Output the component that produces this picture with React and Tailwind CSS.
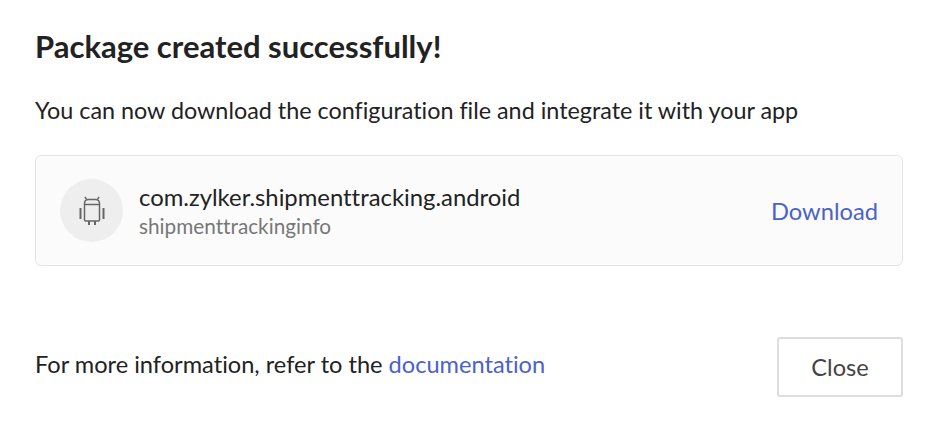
const font = { fontFamily: "Lato, sans-serif" };

function AndroidIcon() {
  return (
    <svg width="26" height="29" viewBox="19 16 26 29" fill="none" stroke="#666666" strokeWidth="1.5">
      <path d="M24.5 25v-1.5Q24.5 20 28 19.5h8q3.500 .5 3.500 4V25" />
      <rect x="24.500" y="24.500" width="15" height="16.500" rx="1" />
      <path d="M26.500 19.500 25 16.800M37.500 19.500 39 16.800" />
      <path d="M20.500 28v11M43.500 28v11" strokeWidth="2" />
      <path d="M29 41v4M35 41v4" strokeWidth="2" />
    </svg>
  );
}

export default function App() {
  return (
    <div className="w-[931px] h-[440px] bg-white overflow-hidden pt-[26px] px-[35px] [font-variant-ligatures:none]" style={font}>
      <h1 className="text-[31px] leading-[40px] font-bold text-[#222] h-[40px]">Package created successfully!</h1>
      <p className="mt-[28px] text-[23.35px] leading-[32px] text-[#222]">
        You can now download the configuration file and integrate it with your app
      </p>
      <div className="mt-[29px] w-[868px] h-[111px] border border-[#e4e4e4] rounded-md bg-[#fbfbfb] flex items-center pl-[24px] pr-[24px]">
        <div className="w-[63px] h-[63px] rounded-full bg-[#eeeeee] flex items-center justify-center">
          <AndroidIcon />
        </div>
        <div className="ml-[16px] flex-1 pt-[1px]">
          <div className="text-[23.85px] leading-[30px] text-[#222]">com.zylker.shipmenttracking.android</div>
          <div className="text-[20.75px] leading-[28px] text-[#777]">shipmenttrackinginfo</div>
        </div>
        <a className="text-[23.7px] text-[#4a62c9] mt-[2px]">Download</a>
      </div>
      <div className="mt-[71px] w-[868px] flex items-center justify-between">
        <p className="text-[23.6px] leading-[32px] text-[#222] -mt-[6px]">
          For more information, refer to the <a className="text-[#4a62c9]">documentation</a>
        </p>
        <button className="w-[126px] h-[60px] border-2 border-[#dddddd] rounded-[3px] text-[23.6px] text-[#444] bg-white pt-[2px]">
          Close
        </button>
      </div>
    </div>
  );
}
